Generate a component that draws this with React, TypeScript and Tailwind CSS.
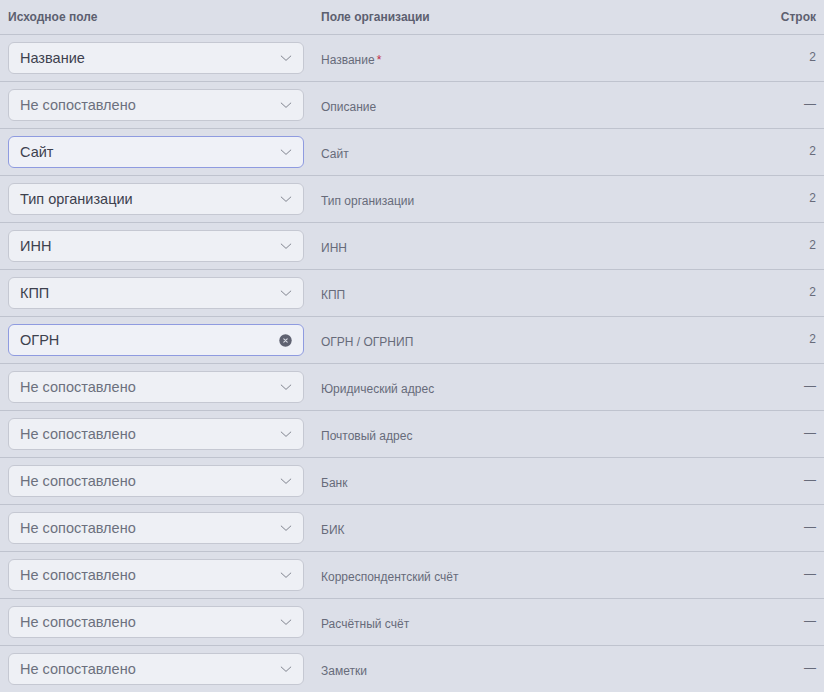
import { useState } from 'react';

interface Row {
    source: string | null;
    target: string;
    required?: boolean;
    count: string;
    focused?: boolean;
    clearable?: boolean;
}

const rows: Row[] = [
    { source: 'Название', target: 'Название', required: true, count: '2' },
    { source: null, target: 'Описание', count: '—' },
    { source: 'Сайт', target: 'Сайт', count: '2', focused: true },
    { source: 'Тип организации', target: 'Тип организации', count: '2' },
    { source: 'ИНН', target: 'ИНН', count: '2' },
    { source: 'КПП', target: 'КПП', count: '2' },
    { source: 'ОГРН', target: 'ОГРН / ОГРНИП', count: '2', focused: true, clearable: true },
    { source: null, target: 'Юридический адрес', count: '—' },
    { source: null, target: 'Почтовый адрес', count: '—' },
    { source: null, target: 'Банк', count: '—' },
    { source: null, target: 'БИК', count: '—' },
    { source: null, target: 'Корреспондентский счёт', count: '—' },
    { source: null, target: 'Расчётный счёт', count: '—' },
    { source: null, target: 'Заметки', count: '—' },
];

function Chevron() {
    return (
        <svg width="12" height="12" viewBox="0 0 12 12" fill="none" stroke="#80848f" strokeWidth="1" strokeLinecap="round" strokeLinejoin="round">
            <path d="M1.2 4 6 8.4 10.8 4" />
        </svg>
    );
}

function ClearIcon() {
    return (
        <svg width="13" height="13" viewBox="0 0 13 13">
            <circle cx="6.5" cy="6.5" r="6.2" fill="#5f6271" />
            <path d="M4.8 4.8l3.4 3.4M8.2 4.8 4.8 8.2" stroke="#d9dbe3" strokeWidth="1.1" strokeLinecap="round" />
        </svg>
    );
}

function FieldSelect({ row }: { row: Row }) {
    return (
        <div
            className={`h-8 w-[296px] flex items-center justify-between rounded-md border pl-[11px] pr-[11px] text-[14.5px] ${
                row.focused ? 'border-[#8f9be0] bg-[#eff1f7]' : 'border-[#c5c8d2] bg-[#eef0f5]'
            }`}
        >
            <span className={`pt-px ${row.source ? 'text-[#3d414e]' : 'text-[#6c707e]'}`}>
                {row.source ?? 'Не сопоставлено'}
            </span>
            {row.clearable ? <ClearIcon /> : <Chevron />}
        </div>
    );
}

export default function App() {
    const [items] = useState(rows);

    return (
        <div className="w-[824px] h-[692px] overflow-hidden bg-[#dcdfe8] text-[#3b3f4c]" style={{ fontFamily: '"Liberation Sans", Arial, sans-serif' }}>
            {/* Column headers */}
            <div className="h-[35px] flex items-center pl-2 pr-2 border-b border-[#bfc3ce] text-xs font-bold text-[#5c6070]">
                <div className="w-[313px]">Исходное поле</div>
                <div className="flex-1">Поле организации</div>
                <div>Строк</div>
            </div>

            {items.map((row, i) => (
                <div
                    key={row.target}
                    className={`h-[47px] flex items-center pl-2 pr-2 ${i < items.length - 1 ? 'border-b border-[#bfc3ce]' : 'pb-px'}`}
                >
                    <FieldSelect row={row} />
                    <div className="flex-1 pl-[17px] pt-[3px] text-xs text-[#676b7a]">
                        {row.target}
                        {row.required && <span className="ml-[2px] text-[#c02b48]">*</span>}
                    </div>
                    <div className="-mt-[3px] text-xs text-[#676b7a]">{row.count}</div>
                </div>
            ))}
        </div>
    );
}
